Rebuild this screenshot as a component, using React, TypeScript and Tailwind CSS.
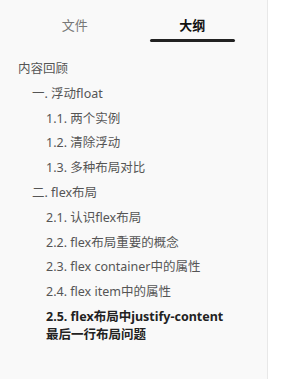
export default function App() {
  const items: { label: string; level: number; active?: boolean }[] = [
    { label: '内容回顾', level: 0 },
    { label: '一. 浮动float', level: 1 },
    { label: '1.1. 两个实例', level: 2 },
    { label: '1.2. 清除浮动', level: 2 },
    { label: '1.3. 多种布局对比', level: 2 },
    { label: '二. flex布局', level: 1 },
    { label: '2.1. 认识flex布局', level: 2 },
    { label: '2.2. flex布局重要的概念', level: 2 },
    { label: '2.3. flex container中的属性', level: 2 },
    { label: '2.4. flex item中的属性', level: 2 },
    { label: '2.5. flex布局中justify-content最后一行布局问题', level: 2, active: true },
  ]

  const indent = ['pl-[18px]', 'pl-[32px]', 'pl-[46px]']

  return (
    <div
      className="flex h-[379px] w-[285px] bg-white"
      style={{ fontFamily: '"Noto Sans", "Noto Sans CJK SC", sans-serif' }}
    >
      <div className="flex w-[268px] flex-col border-r border-[#e8e8e8] bg-[#f9f9f9]">
        {/* Tabs */}
        <div className="flex px-4 pt-[13px]">
          <div className="flex w-[118px] flex-col items-center">
            <span className="text-[13px] leading-[24px] text-[#777]">文件</span>
          </div>
          <div className="flex w-[118px] flex-col items-center">
            <span className="text-[13px] font-bold leading-[24px] text-[#111]">大纲</span>
            <div className="mt-[2px] h-[3px] w-[85px] rounded-full bg-[#222]" />
          </div>
        </div>

        {/* Outline */}
        <ul className="mt-[15px] pr-[34px]">
          {items.map((item) => (
            <li
              key={item.label}
              className={`${indent[item.level]} text-[12.5px] ${
                item.active
                  ? 'font-bold leading-[18px] text-[#222] pt-[3px]'
                  : 'leading-[24.8px] text-[#555]'
              }`}
            >
              {item.label}
            </li>
          ))}
        </ul>
      </div>
    </div>
  )
}
